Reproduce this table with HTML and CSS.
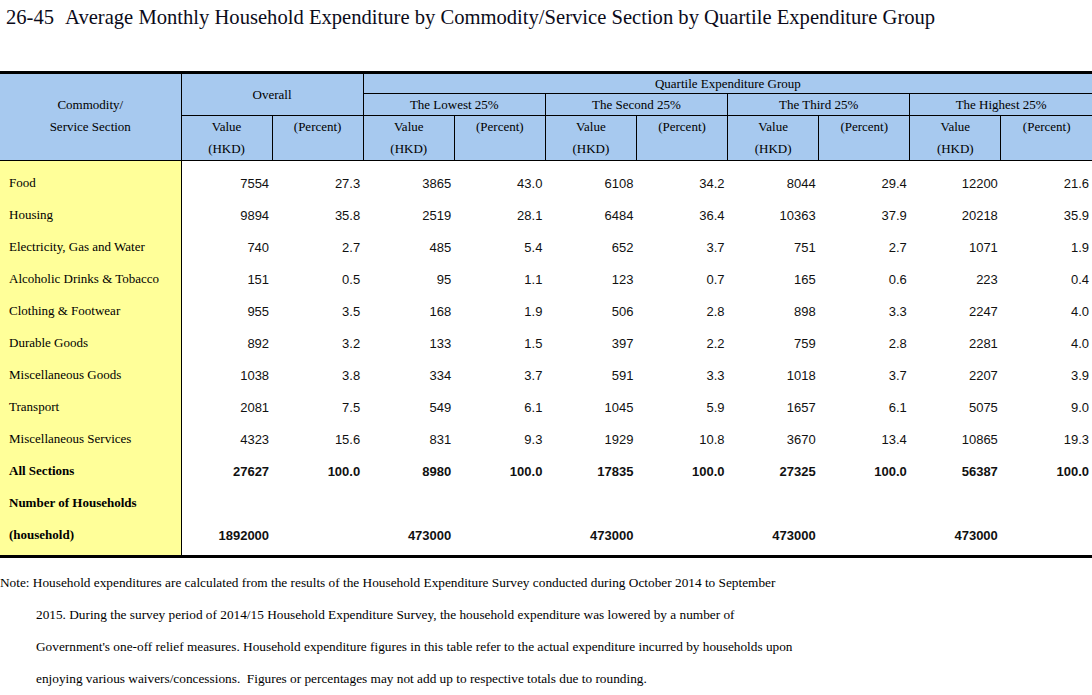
FILE: index.html
```html
<!DOCTYPE html>
<html>
<head>
<meta charset="utf-8">
<link rel="stylesheet" href="styles.css">
</head>
<body>
<div class="title"><span class="num">26-45</span>Average Monthly Household Expenditure by Commodity/Service Section by Quartile Expenditure Group</div>
<table class="tbl">
<colgroup>
<col class="c-label"><col><col><col><col><col><col><col><col><col><col>
</colgroup>
<thead>
<tr class="h1">
<th rowspan="3" class="h-label">Commodity/<br>Service Section</th>
<th rowspan="2" colspan="2">Overall</th>
<th colspan="8">Quartile Expenditure Group</th>
</tr>
<tr class="h2">
<th colspan="2">The Lowest 25%</th>
<th colspan="2">The Second 25%</th>
<th colspan="2">The Third 25%</th>
<th colspan="2">The Highest 25%</th>
</tr>
<tr class="h3">
<th>Value<br>(HKD)</th><th>(Percent)</th>
<th>Value<br>(HKD)</th><th>(Percent)</th>
<th>Value<br>(HKD)</th><th>(Percent)</th>
<th>Value<br>(HKD)</th><th>(Percent)</th>
<th>Value<br>(HKD)</th><th>(Percent)</th>
</tr>
</thead>
<tbody>
<tr class="first"><td class="lab">Food</td><td>7554</td><td>27.3</td><td>3865</td><td>43.0</td><td>6108</td><td>34.2</td><td>8044</td><td>29.4</td><td>12200</td><td>21.6</td></tr>
<tr><td class="lab">Housing</td><td>9894</td><td>35.8</td><td>2519</td><td>28.1</td><td>6484</td><td>36.4</td><td>10363</td><td>37.9</td><td>20218</td><td>35.9</td></tr>
<tr><td class="lab">Electricity, Gas and Water</td><td>740</td><td>2.7</td><td>485</td><td>5.4</td><td>652</td><td>3.7</td><td>751</td><td>2.7</td><td>1071</td><td>1.9</td></tr>
<tr><td class="lab">Alcoholic Drinks &amp; Tobacco</td><td>151</td><td>0.5</td><td>95</td><td>1.1</td><td>123</td><td>0.7</td><td>165</td><td>0.6</td><td>223</td><td>0.4</td></tr>
<tr><td class="lab">Clothing &amp; Footwear</td><td>955</td><td>3.5</td><td>168</td><td>1.9</td><td>506</td><td>2.8</td><td>898</td><td>3.3</td><td>2247</td><td>4.0</td></tr>
<tr><td class="lab">Durable Goods</td><td>892</td><td>3.2</td><td>133</td><td>1.5</td><td>397</td><td>2.2</td><td>759</td><td>2.8</td><td>2281</td><td>4.0</td></tr>
<tr><td class="lab">Miscellaneous Goods</td><td>1038</td><td>3.8</td><td>334</td><td>3.7</td><td>591</td><td>3.3</td><td>1018</td><td>3.7</td><td>2207</td><td>3.9</td></tr>
<tr><td class="lab">Transport</td><td>2081</td><td>7.5</td><td>549</td><td>6.1</td><td>1045</td><td>5.9</td><td>1657</td><td>6.1</td><td>5075</td><td>9.0</td></tr>
<tr><td class="lab">Miscellaneous Services</td><td>4323</td><td>15.6</td><td>831</td><td>9.3</td><td>1929</td><td>10.8</td><td>3670</td><td>13.4</td><td>10865</td><td>19.3</td></tr>
<tr class="bold"><td class="lab">All Sections</td><td>27627</td><td>100.0</td><td>8980</td><td>100.0</td><td>17835</td><td>100.0</td><td>27325</td><td>100.0</td><td>56387</td><td>100.0</td></tr>
<tr class="bold"><td class="lab">Number of Households</td><td></td><td></td><td></td><td></td><td></td><td></td><td></td><td></td><td></td><td></td></tr>
<tr class="bold last"><td class="lab">(household)</td><td>1892000</td><td></td><td>473000</td><td></td><td>473000</td><td></td><td>473000</td><td></td><td>473000</td><td></td></tr>
</tbody>
</table>
<div class="note">Note: Household expenditures are calculated from the results of the Household Expenditure Survey conducted during October 2014 to September<br>2015. During the survey period of 2014/15 Household Expenditure Survey, the household expenditure was lowered by a number of<br>Government's one-off relief measures. Household expenditure figures in this table refer to the actual expenditure incurred by households upon<br>enjoying various waivers/concessions.&nbsp; Figures or percentages may not add up to respective totals due to rounding.</div>
</body>
</html>
```
FILE: styles.css
```css
html, body {
  margin: 0;
  padding: 0;
  background: #fff;
}
body {
  width: 1092px;
  overflow: hidden;
  font-family: "Liberation Serif", "Times New Roman", serif;
  color: #000;
}
.title {
  height: 71px;
  box-sizing: border-box;
  padding: 5px 0 0 6px;
  font-family: "Liberation Serif", "Times New Roman", serif;
  font-size: 20.6px;
  line-height: 24px;
  color: #0b0b1a;
  white-space: nowrap;
}
.title .num {
  margin-right: 11px;
}
.tbl {
  width: 1092px;
  table-layout: fixed;
  border-collapse: collapse;
  font-size: 13px;
}
.c-label {
  width: 181px;
}
.tbl thead tr:first-child th {
  border-top: 3px solid #000;
}
.tbl th {
  background: #a7c9ef;
  font-weight: normal;
  border: 1px solid #000;
  padding: 0;
  line-height: 22px;
  text-align: center;
  vertical-align: middle;
}
.tbl th:first-child {
  border-left: none;
}
.tbl th:last-child {
  border-right: none;
}
.tbl .h1 th {
  height: 19px;
  line-height: 18px;
}
.tbl .h2 th {
  height: 21px;
  line-height: 21px;
}
.tbl .h3 th {
  height: 43px;
  vertical-align: top;
}
.tbl .h1 th.h-label {
  vertical-align: middle;
  line-height: 22px;
  padding: 0 0 2px 0;
}
.tbl td {
  height: 32px;
  padding: 0 3px 0 0;
  font-family: "Liberation Sans", Arial, sans-serif;
  font-size: 13px;
  text-align: right;
  vertical-align: middle;
  color: #111;
}
.tbl td.lab {
  font-family: "Liberation Serif", "Times New Roman", serif;
  text-align: left;
  padding-left: 9px;
  background: #ffff99;
  border-right: 1px solid #000;
  color: #000;
}
.tbl tr.first td {
  height: 32px;
  padding-top: 6px;
}
.tbl tr.last td {
  height: 32px;
  padding-bottom: 4px;
  border-bottom: 3px solid #000;
}
.tbl tr.bold td {
  font-weight: bold;
}
.note {
  margin-top: 9px;
  padding-left: 36px;
  text-indent: -36px;
  white-space: nowrap;
  font-size: 13.3px;
  line-height: 32px;
  color: #000;
}
```
